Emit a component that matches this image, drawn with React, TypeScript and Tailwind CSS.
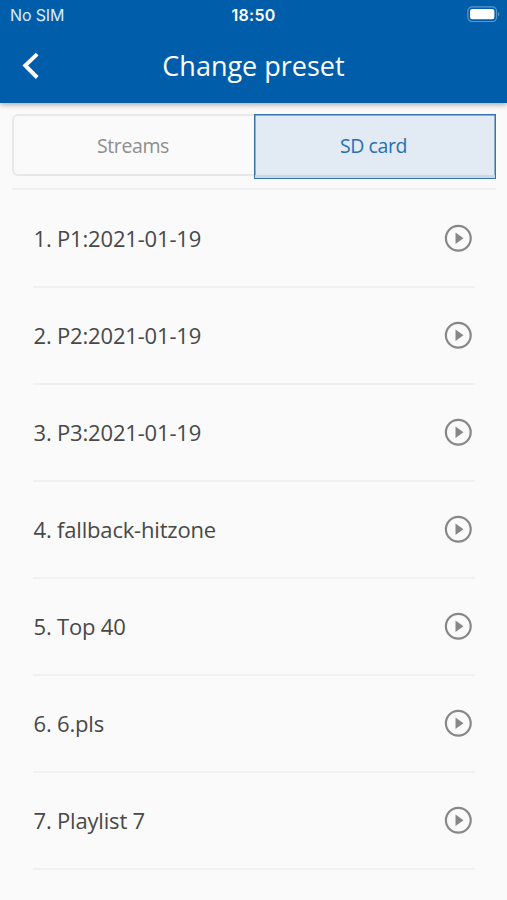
const presets = [
  'P1:2021-01-19',
  'P2:2021-01-19',
  'P3:2021-01-19',
  'fallback-hitzone',
  'Top 40',
  '6.pls',
  'Playlist 7',
];

function Battery() {
  return (
    <svg width="34" height="18" viewBox="0 0 34 18" fill="none">
      <rect x="0.9" y="0.9" width="28.6" height="14.6" rx="4.2" stroke="#5c97cb" strokeWidth="1.2" />
      <rect x="3" y="3.1" width="24.4" height="10.2" rx="2.2" fill="#fff" />
      <path d="M31 6.2c1.8.7 1.8 3.4 0 4.1z" fill="#5c97cb" />
    </svg>
  );
}

function PlayIcon() {
  return (
    <svg width="28" height="28" viewBox="0 0 28 28" fill="none">
      <circle cx="14.3" cy="14.3" r="12.4" stroke="#878787" strokeWidth="2.2" />
      <path d="M11.5 8.6v11.4l8-5.7z" fill="#878787" />
    </svg>
  );
}

export default function App() {
  return (
    <div className="flex h-[900px] w-[507px] flex-col overflow-hidden bg-[#fafafa] font-['Open_Sans','Noto_Sans',sans-serif]">
      <header className="z-10 h-[103px] shrink-0 bg-[#005da9] text-white shadow-[0_2px_5px_rgba(0,0,0,0.3)]">
        <div className="grid h-[30px] grid-cols-3 items-center px-[6px] font-['Inter',sans-serif] text-[16px] leading-[30px]">
          <span className="pl-1 tracking-[-0.15px] text-[#dcecfa]">No SIM</span>
          <span className="text-center font-semibold tracking-[0.3px]">18:50</span>
          <span className="flex justify-end"><Battery /></span>
        </div>
        <div className="grid h-[72px] grid-cols-[60px_1fr_60px] items-center">
          <button aria-label="Back" className="pl-[21px]">
            <svg width="20" height="28" viewBox="0 0 20 28" fill="none">
              <path d="M16.2 2.2 4.2 13.5 16.2 25.5" stroke="#fff" strokeWidth="3.9" />
            </svg>
          </button>
          <h1 className="pb-px text-center text-[27px] leading-[36px]">Change preset</h1>
        </div>
      </header>
      <main className="flex flex-col px-3 pt-[11px]">
        <div className="flex h-[65px] w-[484px] items-start text-[19.5px] tracking-[-0.4px]">
          <button className="h-[62px] w-[242px] rounded-l-[6px] border-2 border-r-0 border-[#e8e8e8] pr-0.5 pt-0.5 text-[#8e8e8e]">
            Streams
          </button>
          <button className="h-[65px] w-[242px] border border-[#3474b1] bg-[#e2eaf3] pb-px pr-[3px] text-[#2670b5] shadow-[inset_0_-3px_0_#ccd8e5,inset_0_0_0_0.5px_#3474b1]">
            SD card
          </button>
        </div>
        <div className="mt-[9px] h-[2px] w-[484px] bg-[#f0f0f0]" />
        <ol className="ml-[21px] mt-px w-[442px]">
          {presets.map((name, i) => (
            <li key={name} className="flex h-[97px] items-center justify-between border-b-2 border-[#f1f1f1] pb-[2px] pl-[0.5px] pr-[3px] text-[22px] leading-[30px] tracking-[-0.18px] text-[#484848]">
              <span>{i + 1}. {name}</span>
              <button aria-label={`Play ${name}`}><PlayIcon /></button>
            </li>
          ))}
        </ol>
      </main>
    </div>
  );
}
